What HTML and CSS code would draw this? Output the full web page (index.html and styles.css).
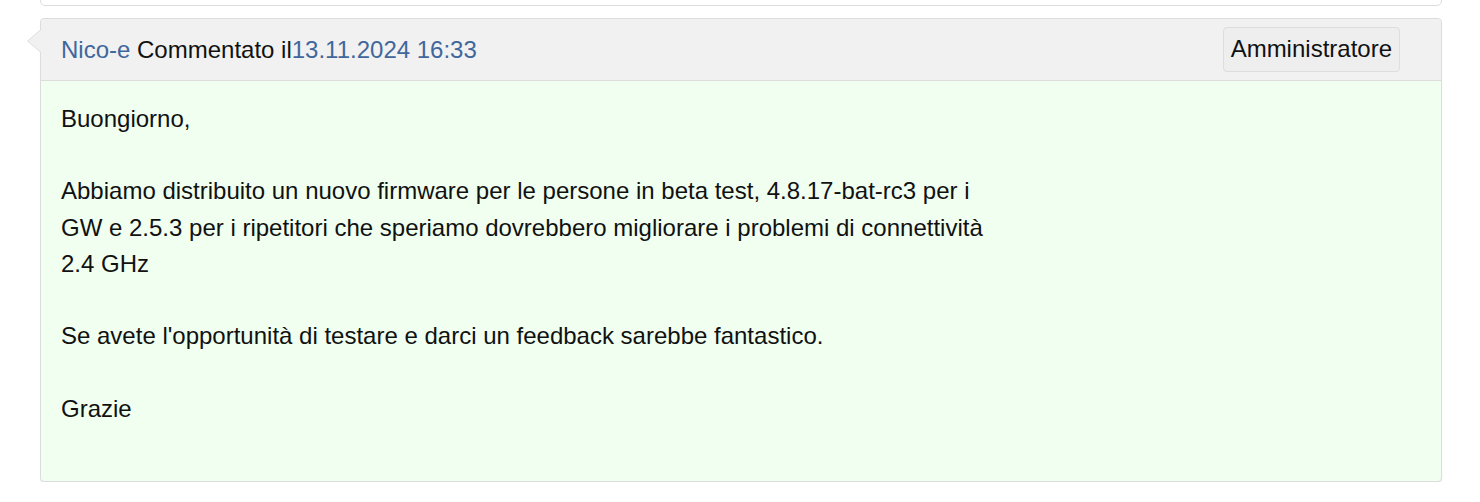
FILE: index.html
```html
<!DOCTYPE html>
<html lang="it">
<head>
    <meta charset="UTF-8">
    <title>Commento</title>
    <link rel="stylesheet" href="styles.css">
</head>
<body>
    <div class="thread">
        <div class="prev-card"></div>

        <div class="comment">
            <div class="comment-head">
                <span class="meta">
                    <a href="#" class="author">Nico-e</a> Commentato il<a href="#" class="date">13.11.2024 16:33</a>
                </span>
                <span class="role">Amministratore</span>
            </div>
            <div class="comment-body">
                Buongiorno,<br>
                <br>
                Abbiamo distribuito un nuovo firmware per le persone in beta test, 4.8.17-bat-rc3 per i<br>
                GW e 2.5.3 per i ripetitori che speriamo dovrebbero migliorare i problemi di connettività<br>
                2.4 GHz<br>
                <br>
                Se avete l'opportunità di testare e darci un feedback sarebbe fantastico.<br>
                <br>
                Grazie
            </div>
        </div>
    </div>
</body>
</html>
```

FILE: styles.css
```css
body {
    margin: 0;
    padding: 0 38px 0 40px;
    background: #fff;
    font-family: "Liberation Sans", Arial, Helvetica, sans-serif;
    font-size: 24px;
    color: #111;
}
.thread {
    width: 1402px;
}
.prev-card {
    height: 28px;
    margin-top: -24px;
    background: #fff;
    border: 1px solid #ddd;
    border-radius: 5px;
}
.comment {
    position: relative;
    margin-top: 12px;
    border: 1px solid #dcdcdc;
    border-radius: 4px;
    box-shadow: 0 1px 1px rgba(0,0,0,0.08);
    background: #f0fff0;
}
/* little pointer on the left of the header */
.comment::before,
.comment::after {
    content: "";
    position: absolute;
    top: 10px;
    width: 0;
    height: 0;
    border-style: solid;
}
.comment::before {
    left: -14px;
    border-width: 12px 14px 12px 0;
    border-color: transparent #dcdcdc transparent transparent;
}
.comment::after {
    left: -13px;
    top: 11px;
    border-width: 11px 13px 11px 0;
    border-color: transparent #f1f1f1 transparent transparent;
}
.comment-head {
    display: flex;
    align-items: center;
    justify-content: space-between;
    height: 61px;
    padding: 0 41px 0 20px;
    background: #f1f1f1;
    border-bottom: 1px solid #dddddd;
    border-radius: 4px 4px 0 0;
}
.meta a {
    color: #40679c;
    text-decoration: none;
}
.role {
    padding: 7px 7px 8px;
    background: #eeeeee;
    border: 1px solid #dddddd;
    border-radius: 4px;
    color: #111;
}
.comment-body {
    padding: 20px 20px 54px;
    line-height: 36.2px;
}
```
